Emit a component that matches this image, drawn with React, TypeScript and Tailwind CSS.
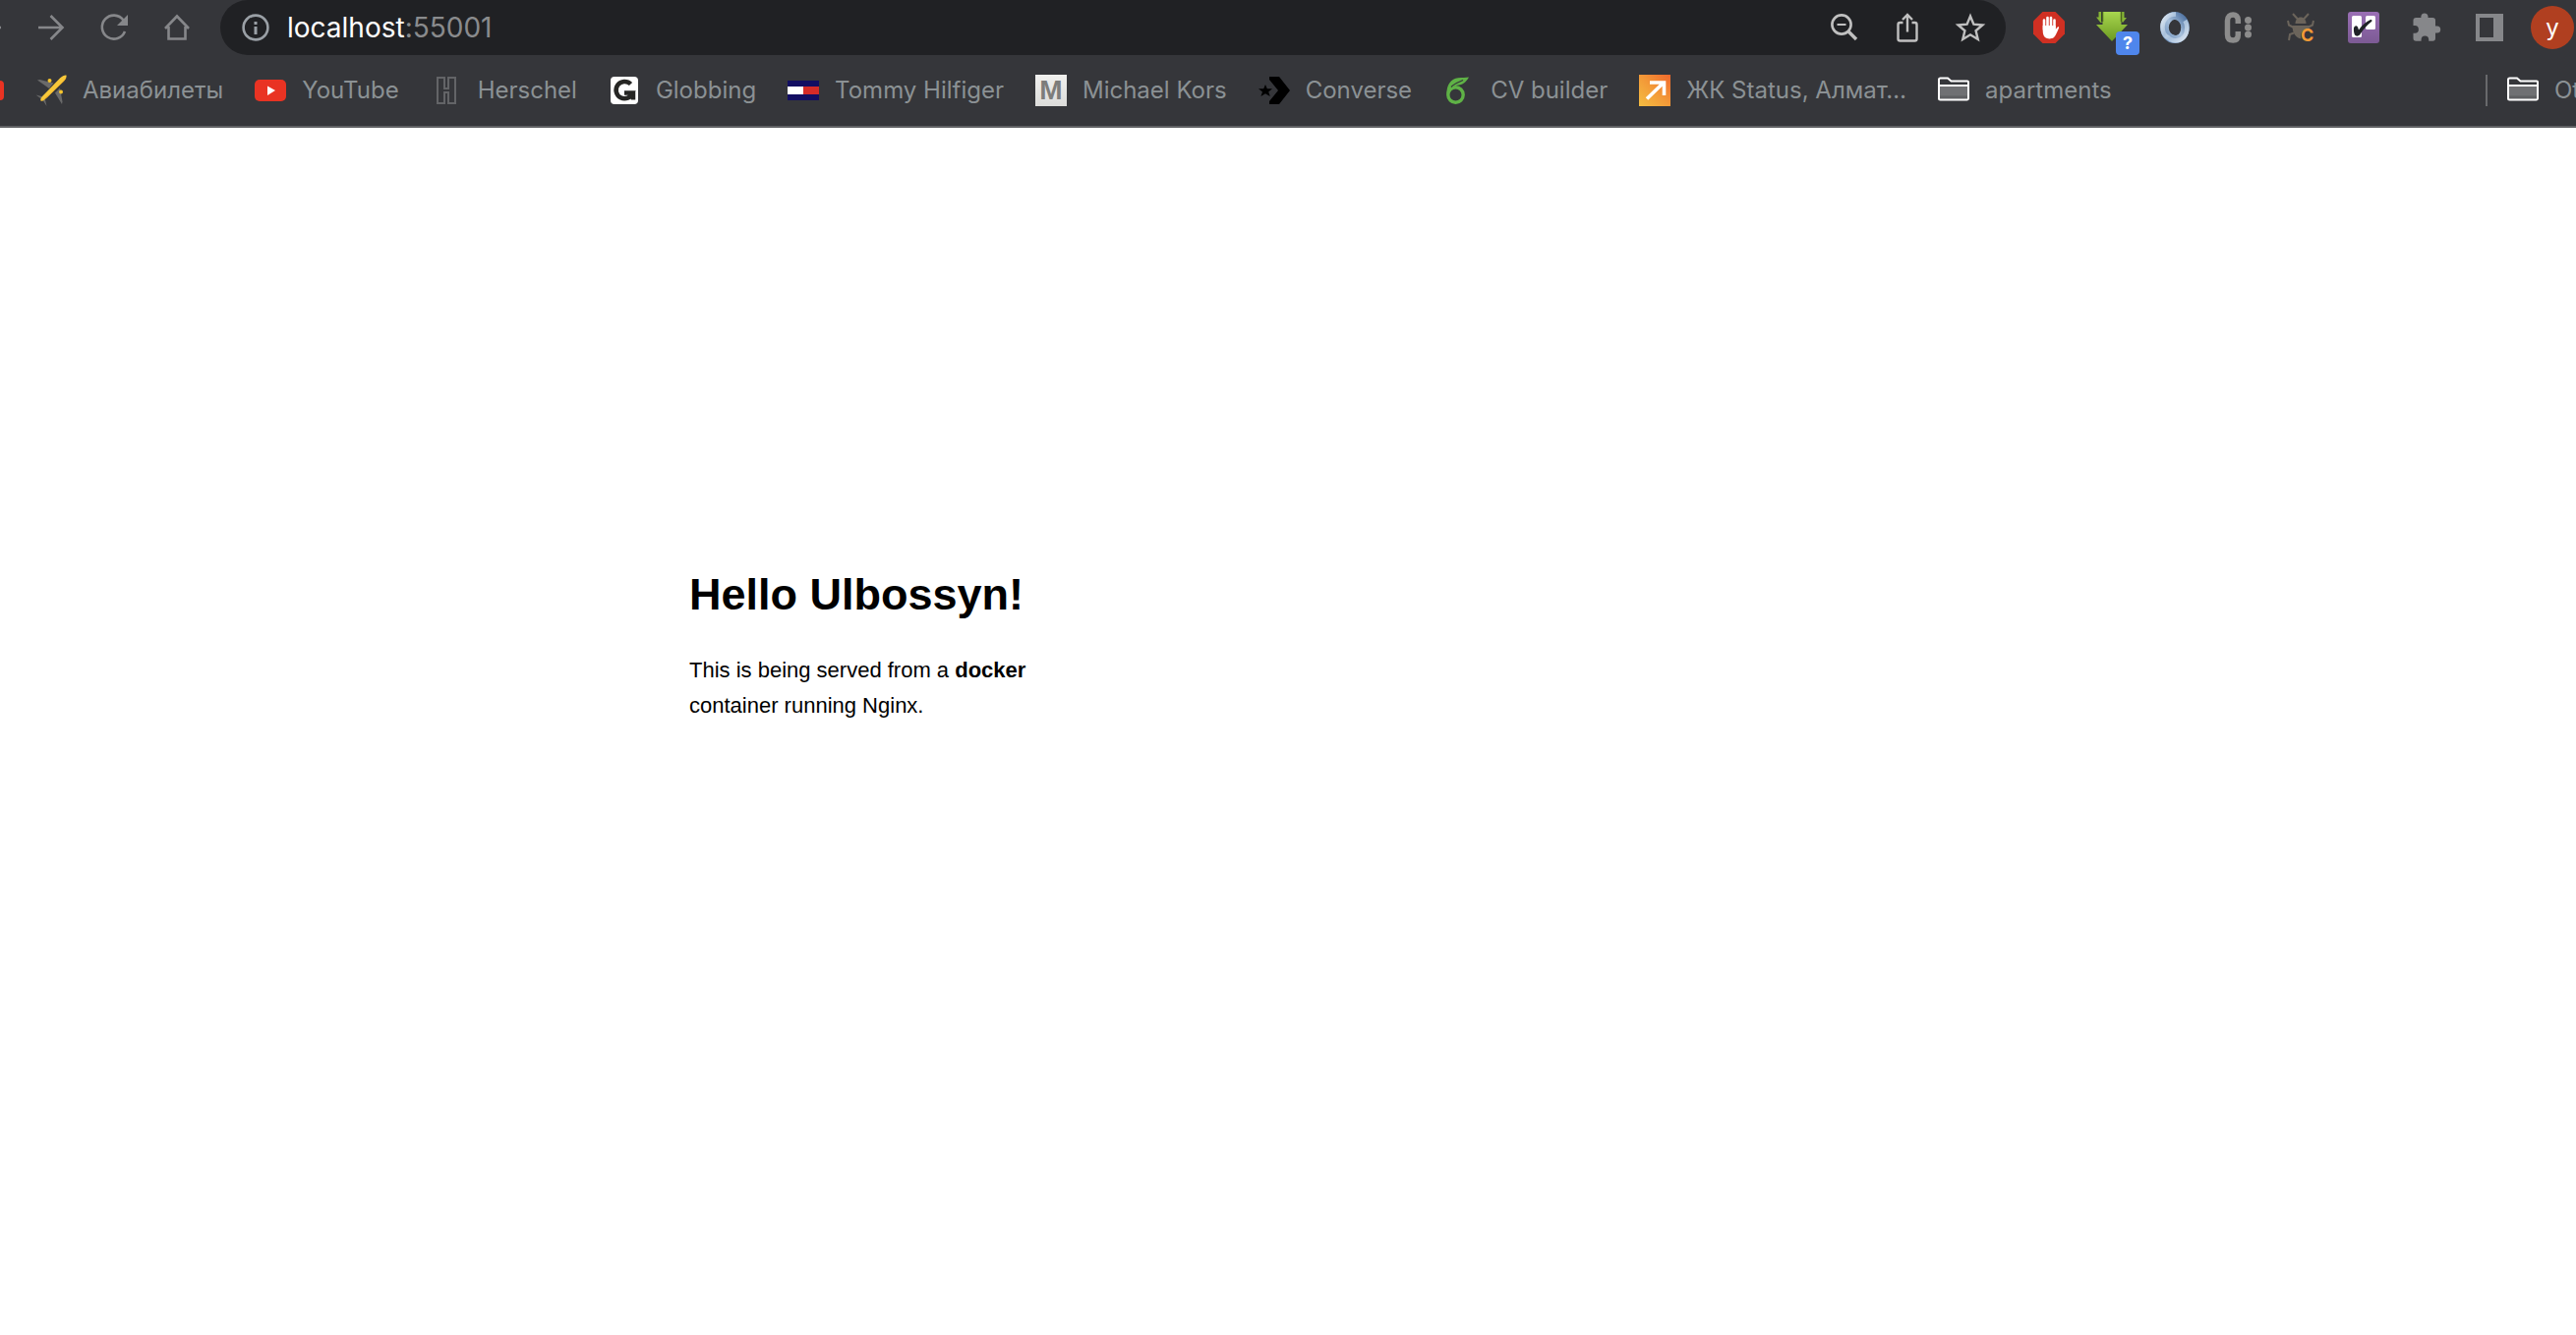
import type { ReactNode } from "react";

function Icon({ children }: { children: ReactNode }) {
  return (
    <svg viewBox="0 0 32 32" className="size-8 shrink-0" fill="none" aria-hidden="true">
      {children}
    </svg>
  );
}

function IconButton({ label, children }: { label: string; children: ReactNode }) {
  return (
    <button type="button" aria-label={label} className="relative flex size-8 shrink-0 items-center justify-center">
      {children}
    </button>
  );
}

function Folder() {
  return (
    <Icon>
      <path d="M1 5V24a1.500 1.500 0 0 0 1.500 1.500h27a1.500 1.500 0 0 0 1.500-1.500V7.500a1 1 0 0 0-1-1H13.500L10 3.500H2.500A1.500 1.500 0 0 0 1 5Z" fill="#35363a" />
      <path d="M1 11h30v14H1z" fill="#6f7073" />
      <path d="M2 21.500h28V25H2z" fill="#5f6063" />
      <path d="M1 5V24a1.500 1.500 0 0 0 1.500 1.500h27a1.500 1.500 0 0 0 1.500-1.500V7.500a1 1 0 0 0-1-1H13.500L10 3.500H2.500A1.500 1.500 0 0 0 1 5ZM1 11h30" stroke="#fff" strokeWidth="2" />
    </Icon>
  );
}

const bookmarks: { label: string; icon: ReactNode }[] = [
  {
    label: "Авиабилеты",
    icon: (
      <Icon>
        <path d="M2 5.500 4.500 5l14 3.500-4.500 5.500Z" fill="#6a6a6a" />
        <path d="M27.500 27.500 27 30 20 18.500l5-5Z" fill="#6a6a6a" />
        <path d="M.5 20.500 8 22.500l-1.500 2.500Z" fill="#6a6a6a" />
        <path d="M11.500 32 10 25.500l-3-.5Z" fill="#6a6a6a" />
        <circle cx="14.500" cy="6" r="2" fill="#f7c52d" />
        <circle cx="26" cy="17.500" r="2" fill="#f7c52d" />
        <path d="M5.500 26.500C4.500 24.500 7 22 9 20L25 3.500C27.500 1 30 0 31.500.5c.5 1.500-.5 4-3 6.500L12 23c-2 2-4.500 4.500-6.500 3.500Z" fill="#f8c83a" />
        <path d="M6.500 26.500 12 23 28.500 7c1.500-1.500 2.500-3 2.900-4.500C29 6.500 16 19 6.500 26.500Z" fill="#eda826" />
      </Icon>
    ),
  },
  {
    label: "YouTube",
    icon: (
      <Icon>
        <rect x="0" y="5" width="32" height="22" rx="5" fill="#e93323" />
        <path d="m13 11.500 8 4.500-8 5Z" fill="#fff" />
      </Icon>
    ),
  },
  {
    label: "Herschel",
    icon: (
      <Icon>
        <path d="M7 3h7v11h4V3h7v26h-7V18h-4v11H7Z" stroke="#636467" strokeWidth="2" />
      </Icon>
    ),
  },
  {
    label: "Globbing",
    icon: (
      <Icon>
        <rect x="2" y="2" width="28" height="28" rx="4" fill="#fff" />
        <path d="M22.500 9.500A8.700 8.700 0 1 0 24.500 18.500H16M25 18v7.500" stroke="#262624" strokeWidth="4.500" />
      </Icon>
    ),
  },
  {
    label: "Tommy Hilfiger",
    icon: (
      <Icon>
        <path d="M0 6h32v20H0z" fill="#120e62" />
        <path d="M0 12h16v8H0z" fill="#fff" />
        <path d="M16 12h16v8H16z" fill="#d52b27" />
      </Icon>
    ),
  },
  {
    label: "Michael Kors",
    icon: (
      <span
        aria-hidden="true"
        className="flex size-8 shrink-0 items-center justify-center bg-linear-to-b from-[#f0f0ee] to-[#dcdcda] text-[28px] leading-8 font-black text-[#7d7d7b]"
        style={{ fontFamily: '"Liberation Sans", sans-serif' }}
      >
        M
      </span>
    ),
  },
  {
    label: "Converse",
    icon: (
      <Icon>
        <path d="M11 2h10l11 14-11 14H11v-3l9-11-9-11Z" fill="#000" />
        <path d="m7 10 1.800 4.200H14l-3.800 3.300 1.600 4.500L7 19.300 2.400 22 4 17.500 0 14.200h5.200Z" fill="#000" />
      </Icon>
    ),
  },
  {
    label: "CV builder",
    icon: (
      <Icon>
        <circle cx="12.500" cy="20.500" r="7.700" stroke="#5fb246" strokeWidth="3.400" />
        <path d="M3.500 20C3 10 8 4 15 3.200c4-.5 7.500 0 11-.7C24 5.500 22 9.500 16 10.500c-3 .5-5 .5-7 3L6 17Z" fill="#5fb246" />
        <path d="M8 12.500C11 9 15 8 20 5.500" stroke="#35363a" strokeWidth="1.200" />
      </Icon>
    ),
  },
  {
    label: "ЖК Status, Алмат…",
    icon: (
      <Icon>
        <defs>
          <linearGradient id="sunset" x1="1" y1="0" x2="0" y2="1">
            <stop offset="0" stopColor="#f0682c" />
            <stop offset=".5" stopColor="#f39a38" />
            <stop offset="1" stopColor="#f4bd42" />
          </linearGradient>
        </defs>
        <path d="M0 0h32v32H0z" fill="url(#sunset)" />
        <path d="M8 24.500 24 9M11 8h14.500v13" stroke="#fff" strokeWidth="3.600" />
      </Icon>
    ),
  },
  { label: "apartments", icon: <Folder /> },
];

function NavIcons() {
  return (
    <nav aria-label="History" className="-ml-7 flex gap-8">
      <IconButton label="Back">
        <Icon>
          <path d="M29 16H5m11-11L5 16l11 11" stroke="#86878a" strokeWidth="2.600" />
        </Icon>
      </IconButton>
      <IconButton label="Forward">
        <Icon>
          <path d="M3 16h24M15.500 4 27.500 16 15.500 28" stroke="#86878a" strokeWidth="2.600" />
        </Icon>
      </IconButton>
      <IconButton label="Reload">
        <Icon>
          <path d="M25.500 8.500A12 12 0 1 0 27 20" stroke="#86878a" strokeWidth="2.600" />
          <path d="M30 3v11H19Z" fill="#86878a" />
        </Icon>
      </IconButton>
      <IconButton label="Home">
        <Icon>
          <path d="M4 17 16 4.500 28 17M7.500 15v12.500h17V15" stroke="#86878a" strokeWidth="2.600" />
        </Icon>
      </IconButton>
    </nav>
  );
}

function AddressBar() {
  return (
    <form className="flex h-14 min-w-0 flex-1 items-center rounded-full bg-[#202124] px-5" onSubmit={(e) => e.preventDefault()}>
      <IconButton label="Site information">
        <Icon>
          <circle cx="16" cy="16" r="12.400" stroke="#9aa0a6" strokeWidth="2.600" />
          <path d="M14.500 10h3v3h-3zM14.500 15h3v8h-3z" fill="#9aa0a6" />
        </Icon>
      </IconButton>
      <div role="textbox" aria-label="Address" tabIndex={0} className="ml-4 flex-1 text-[28px] leading-8 text-[#8a8b8d]">
        <span className="text-white">localhost</span>:55001
      </div>
      <div className="flex gap-8">
        <IconButton label="Zoom out">
          <Icon>
            <circle cx="13" cy="13" r="9.600" stroke="#c0c0c0" strokeWidth="2.600" />
            <path d="M8.500 13h9" stroke="#c0c0c0" strokeWidth="2" />
            <path d="m19.500 19.500 8.500 8.500" stroke="#c0c0c0" strokeWidth="3.400" />
          </Icon>
        </IconButton>
        <IconButton label="Share">
          <Icon>
            <path d="M11.500 11H8.500a2 2 0 0 0-2 2v14.500a2 2 0 0 0 2 2h15a2 2 0 0 0 2-2V13a2 2 0 0 0-2-2h-3M16 20.500V3.500M11 8l5-5 5 5" stroke="#c0c0c0" strokeWidth="2.400" />
          </Icon>
        </IconButton>
        <IconButton label="Bookmark this page">
          <Icon>
            <path d="m16 4.500 3.400 8.200 9 .8-6.800 5.800 2.100 8.700-7.700-4.700L8.300 28l2.100-8.700-6.800-5.800 9-.8Z" stroke="#c0c0c0" strokeWidth="2.400" />
          </Icon>
        </IconButton>
      </div>
    </form>
  );
}

function Extensions() {
  return (
    <div className="flex gap-8">
      <IconButton label="Ad blocker">
        <Icon>
          <path d="M9.500 0h13L32 9.500v13L22.500 32h-13L0 22.500v-13Z" fill="#d03023" />
          <path d="M11 18V8.500M14.500 15V6M18 15V6M21.500 17V8.500" stroke="#fff" strokeWidth="2.600" strokeLinecap="round" />
          <path d="M9.700 14h13v4l1.500-2c1-1.200 2.300-.8 1.800.5-1.500 3.500-3 7.500-5 9.500-2.500 2-7 1.800-9 0-1.700-1.600-2.300-4-2.300-7Z" fill="#fff" />
        </Icon>
      </IconButton>
      <IconButton label="Download helper">
        <Icon>
          <defs>
            <linearGradient id="leaf" x1="0" y1="0" x2="0" y2="1">
              <stop offset="0" stopColor="#a8d64e" />
              <stop offset="1" stopColor="#6b9a22" />
            </linearGradient>
          </defs>
          <path d="M2.500 0H5v10h2L4.500 11 0 5.500h2.500ZM26 0h2.500v6H31l-4 5-3.500-4H26Z" fill="#86b535" />
          <path d="M6.500 0h19v13H32L16 30 0 13h6.500Z" fill="url(#leaf)" />
          <path d="M6.500 0v10M25.500 0v10" stroke="#4a6420" strokeWidth="1.500" />
        </Icon>
        <span className="absolute top-5 left-5 flex size-6 items-center justify-center rounded-sm bg-[#4f86ec] text-[18px] leading-6 font-bold text-white">
          ?
        </span>
      </IconButton>
      <IconButton label="Data formatter">
        <Icon>
          <defs>
            <linearGradient id="ringLight" x1="0" y1="0" x2="1" y2="1">
              <stop offset="0" stopColor="#e2ebf3" />
              <stop offset=".5" stopColor="#a9c1dc" />
              <stop offset="1" stopColor="#dbe6f1" />
            </linearGradient>
            <linearGradient id="ringDark" x1="1" y1="0" x2="0" y2="1">
              <stop offset="0" stopColor="#4f73a2" />
              <stop offset=".5" stopColor="#a9c1dc" />
              <stop offset="1" stopColor="#6c8fba" />
            </linearGradient>
          </defs>
          <ellipse cx="16" cy="16" rx="10.500" ry="11.700" stroke="url(#ringDark)" strokeWidth="8.600" />
          <path d="M17 2.500C8 2.500 3.500 9 3.500 15c0 5 2 9 5 11" stroke="url(#ringLight)" strokeWidth="4.500" />
          <path d="M8 25c3 3.500 5 4.200 8.500 4.200 8 0 11.800-6 11.800-13.200 0-3-.8-5-2-7" stroke="url(#ringLight)" strokeWidth="4.500" />
          <ellipse cx="16.500" cy="16" rx="5.500" ry="8" fill="#35363a" transform="rotate(-8 16 16)" />
        </Icon>
      </IconButton>
      <IconButton label="Clock tracker">
        <Icon>
          <path d="M16.300 12V8.500c0-4-2.300-5.500-5.100-5.500S5.500 4.500 5.500 9v14c0 4.500 2.500 6 5.700 6s5.100-1.500 5.100-5.500V20" stroke="#8c8c8c" strokeWidth="5.500" />
          <circle cx="26.500" cy="8.500" r="3.500" fill="#8c8c8c" />
          <circle cx="26.500" cy="16" r="3.500" fill="#8c8c8c" />
          <circle cx="26.500" cy="23" r="3.500" fill="#8c8c8c" />
        </Icon>
      </IconButton>
      <IconButton label="Bug reporter">
        <Icon>
          <g fill="#6b645b">
            <path d="M10.500 12c0-4 2.500-6.500 5.500-6.500s5.500 2.500 5.500 6.500Z" />
            <path d="M7.500 14h17v4c-4-2-10 2-8 9.500-5-.5-9-5.500-9-13.500Z" />
          </g>
          <path d="M13 7.500 8 2M19 7.500 24 2M9 16l-5-2.500L3 9M23 16l5-2.500L29 9M9 21.500 5 23l-1 6" stroke="#6b645b" strokeWidth="2" />
        </Icon>
        <span className="absolute -bottom-1 left-4 text-[18px] leading-6 font-bold text-[#f09a36]">C</span>
      </IconButton>
      <IconButton label="Task board">
        <Icon>
          <defs>
            <linearGradient id="plum" x1="0" y1="0" x2="0" y2="1">
              <stop offset="0" stopColor="#9a6fb5" />
              <stop offset="1" stopColor="#7c5a94" />
            </linearGradient>
          </defs>
          <rect width="32" height="32" rx="3" fill="url(#plum)" />
          <rect x="4" y="4" width="10" height="22" rx="1.500" fill="#fff" />
          <rect x="18" y="4" width="10" height="14" rx="1.500" fill="#fff" />
          <path d="M6 16.500c1-3 4-3 4.500.5l.5 1.500c3-4.500 7-8 12-10.500 1.500-.5 2 1 1 2-4.500 3.500-8.500 8-12 13.500-1.500 1.500-4 1.500-5 0-.8-2-1.300-4.500-1-7Z" fill="#1f2226" />
        </Icon>
      </IconButton>
      <IconButton label="Extensions">
        <Icon>
          <path
            d="M26.700 15h-1.700V9.400a2.800 2.800 0 0 0-2.800-2.800h-4.700V5a3.600 3.600 0 0 0-7.100 0v1.600H5.300A2.800 2.800 0 0 0 2.500 9.400v5.300h1.600a3.800 3.800 0 0 1 0 7.600H2.500v5.300a2.800 2.800 0 0 0 2.800 2.800h5.300v-1.600a3.800 3.800 0 0 1 7.600 0v1.600h4a2.800 2.800 0 0 0 2.800-2.800V22h1.700a3.500 3.500 0 0 0 0-7Z"
            fill="#86878a"
            transform="translate(0 -.6)"
          />
        </Icon>
      </IconButton>
      <IconButton label="Side panel">
        <Icon>
          <path d="M2 2h28v28H2zM6 6v20h14V6z" fill="#86878a" fillRule="evenodd" />
        </Icon>
      </IconButton>
      <button
        type="button"
        aria-label="Profile"
        className="-mx-1.5 -my-1.5 flex size-11 shrink-0 items-center justify-center rounded-full bg-[#b03f20] text-[24px] leading-8 text-white"
      >
        y
      </button>
    </div>
  );
}

function BookmarkBar() {
  return (
    <div className="flex h-[74px] items-center overflow-hidden border-b-2 border-[#5f6063] text-[24px] leading-8 whitespace-nowrap text-[#8b9194]">
      <a href="#video" aria-label="Video" className="mr-8 h-5 w-1 shrink-0 rounded-r-sm bg-[#e93323]" />
      <nav aria-label="Bookmarks" className="flex gap-8">
        {bookmarks.map(({ label, icon }) => (
          <a key={label} href="#bookmark" className="flex items-center gap-4">
            {icon}
            <span>{label}</span>
          </a>
        ))}
      </nav>
      <div className="ml-auto flex w-[92px] shrink-0 items-center overflow-hidden">
        <span className="mr-5 h-8 w-0.5 shrink-0 bg-[#68696c]" />
        <a href="#other" className="flex items-center gap-4">
          <Folder />
          <span>Other Bookmarks</span>
        </a>
      </div>
    </div>
  );
}

export default function App() {
  return (
    <div className="min-h-screen overflow-hidden bg-white">
      <header className="bg-[#35363a]" style={{ fontFamily: "Inter, sans-serif" }}>
        <div className="flex items-center gap-7 overflow-hidden pr-2">
          <NavIcons />
          <AddressBar />
          <Extensions />
        </div>
        <BookmarkBar />
      </header>
      <main
        className="mx-auto max-w-[1218px] pt-[448px] text-black"
        style={{ fontFamily: '"Liberation Sans", Arial, sans-serif' }}
      >
        <h1 className="text-[45px] leading-[54px] font-bold">Hello Ulbossyn!</h1>
        <p className="mt-8 text-[22px] leading-9">
          This is being served from a <b>docker</b>
          <br />
          container running Nginx.
        </p>
      </main>
    </div>
  );
}
